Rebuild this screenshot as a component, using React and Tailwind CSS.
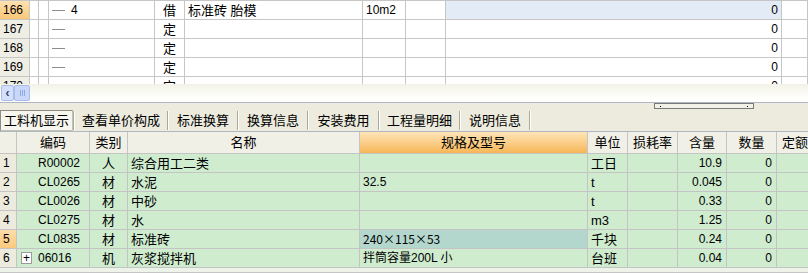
import React from "react";

// ─── Data ─────────────────────────────────────────────────────────────────────

const topRows = [
  { num: "166", active: true, tree: "4", type: "借", name: "标准砖 胎模", unit: "10m2" },
  { num: "167", tree: "", type: "定" },
  { num: "168", tree: "", type: "定" },
  { num: "169", tree: "", type: "定" },
  { num: "170", tree: "", type: "定" },
];

const tabs = [
  { label: "工料机显示", w: "w-[73px]", active: true },
  { label: "查看单价构成", w: "w-[92px]" },
  { label: "标准换算", w: "w-[68px]" },
  { label: "换算信息", w: "w-[68px]" },
  { label: "安装费用", w: "w-[69px]" },
  { label: "工程量明细", w: "w-[79px]" },
  { label: "说明信息", w: "w-[68px]" },
];

const items = [
  { n: "1", code: "R00002", kind: "人", name: "综合用工二类", spec: "", unit: "工日", qty: "10.9" },
  { n: "2", code: "CL0265", kind: "材", name: "水泥", spec: "32.5", unit: "t", qty: "0.045" },
  { n: "3", code: "CL0026", kind: "材", name: "中砂", spec: "", unit: "t", qty: "0.33" },
  { n: "4", code: "CL0275", kind: "材", name: "水", spec: "", unit: "m3", qty: "1.25" },
  { n: "5", code: "CL0835", kind: "材", name: "标准砖", spec: "240×115×53", unit: "千块", qty: "0.24", active: true },
  { n: "6", code: "06016", kind: "机", name: "灰浆搅拌机", spec: "拌筒容量200L 小", unit: "台班", qty: "0.04", plus: true },
];

const cell = "flex items-center shrink-0 h-full border-r overflow-hidden whitespace-nowrap";
const cjk = { fontFamily: '"Noto Sans CJK SC", sans-serif' };

// ─── Upper grid ───────────────────────────────────────────────────────────────

function TopRow({ row }) {
  const b = "border-[#c6c6c6]";
  return (
    <div className="flex h-[19px] border-b border-[#c6c6c6] bg-white">
      <div className={`${cell} ${b} w-[30px] pl-[3px] ${row.active ? "bg-linear-to-b from-[#fee2b0] to-[#f9c777]" : "bg-[#efeee4]"}`}>
        {row.num}
      </div>
      <div className={`${cell} ${b} w-[9px]`} />
      <div className={`${cell} ${b} w-[10px]`} />
      <div className={`${cell} ${b} w-[106px] pl-[3px]`}>
        <span className="w-[13px] h-px bg-[#8c8c8c]" />
        {row.tree && <span className="ml-[6px]">{row.tree}</span>}
      </div>
      <div className={`${cell} ${b} w-[30px] justify-center text-[13px]`}>{row.type}</div>
      <div className={`${cell} ${b} w-[178px] pl-[3px] text-[13px]`}>{row.name}</div>
      <div className={`${cell} ${b} w-[43px] pl-[3px]`}>{row.unit}</div>
      <div className={`${cell} ${b} w-[40px]`} />
      <div className={`${cell} ${b} w-[336px] justify-end pr-[3px] ${row.active ? "bg-[#e3ecf6]" : ""}`}>0</div>
      <div className={`${cell} ${b} w-[26px]`} />
    </div>
  );
}

function ScrollBar() {
  return (
    <div className="flex h-[18px] bg-linear-to-b from-[#f3f2e7] via-[#fbfbf6] to-white items-center">
      <div className="w-[13px] h-[16px] ml-px rounded-[2px] border border-[#a9bde6] bg-[#d4e0fb] flex items-center justify-center text-[12px] font-bold text-[#2c3e6e] leading-none">
        ‹
      </div>
      <div className="w-[16px] h-[16px] rounded-[2px] border border-[#a9bde6] bg-[#c9d8fa] flex items-center justify-center gap-px">
        <span className="w-px h-[6px] bg-[#8ea8e0]" />
        <span className="w-px h-[6px] bg-[#8ea8e0]" />
        <span className="w-px h-[6px] bg-[#8ea8e0]" />
      </div>
    </div>
  );
}

// ─── Tabs ─────────────────────────────────────────────────────────────────────

function TabBar() {
  return (
    <div className="h-[30px] bg-[#ecebde] border-t border-[#b0b7c4] border-b flex flex-col">
      <div className="h-[7px] flex">
        <div className="ml-[654px] w-[100px] h-[6px] border border-[#7a7a7a] bg-[#f2f1e8] flex items-center justify-between px-[5px]">
          <span className="w-px h-px bg-black" />
          <span className="w-px h-px bg-black" />
        </div>
      </div>
      <div className="flex items-center h-[21px] text-[13px]">
        {tabs.map((t) => (
          <React.Fragment key={t.label}>
            <div
              className={`${t.w} h-[21px] flex items-center justify-center ${
                t.active ? "bg-[#f6f5ee] border border-[#c4c2b4] border-t-[#8f8d82] border-l-[#8f8d82]" : ""
              }`}
            >
              {t.label}
            </div>
            <div className="w-[2px] h-[19px] border-l border-[#aca899] border-r border-r-white" />
          </React.Fragment>
        ))}
      </div>
    </div>
  );
}

// ─── Lower grid ───────────────────────────────────────────────────────────────

function Header() {
  const b = "border-[#c4c4c4]";
  return (
    <div className="flex h-[22px] bg-[#f1f0e6] border-b border-[#c4c4c4] text-[13px]">
      <div className={`${cell} ${b} w-[17px]`} />
      <div className={`${cell} ${b} w-[73px] justify-center`}>编码</div>
      <div className={`${cell} ${b} w-[38px] justify-center`}>类别</div>
      <div className={`${cell} ${b} w-[232px] justify-center`}>名称</div>
      <div className={`${cell} ${b} w-[228px] justify-center bg-linear-to-b from-[#fee5b6] to-[#f6b655]`}>规格及型号</div>
      <div className={`${cell} ${b} w-[40px] justify-center`}>单位</div>
      <div className={`${cell} ${b} w-[50px] justify-center`}>损耗率</div>
      <div className={`${cell} ${b} w-[49px] justify-center`}>含量</div>
      <div className={`${cell} ${b} w-[50px] justify-center`}>数量</div>
      <div className={`${cell} ${b} w-[60px] pl-[5px]`}>定额价</div>
    </div>
  );
}

function ItemRow({ it }) {
  const b = "border-[#c4c4c4]";
  return (
    <div className="flex h-[19px] border-b border-[#c4c4c4] bg-[#cfeccf]">
      <div className={`${cell} ${b} w-[17px] pl-[3px] ${it.active ? "bg-linear-to-b from-[#fedcaa] to-[#fbc97c]" : "bg-[#ecebdd]"}`}>
        {it.n}
      </div>
      <div className={`${cell} ${b} w-[73px] pl-[4px]`}>
        {it.plus ? (
          <span className="w-[11px] h-[12px] border border-[#9a9a9a] bg-white flex items-center justify-center text-[12px] leading-none">
            +
          </span>
        ) : (
          <span className="w-[11px]" />
        )}
        <span className="ml-[6px]">{it.code}</span>
      </div>
      <div className={`${cell} ${b} w-[38px] justify-center text-[13px]`}>{it.kind}</div>
      <div className={`${cell} ${b} w-[232px] pl-[3px] text-[13px]`}>{it.name}</div>
      <div className={`${cell} ${b} w-[228px] pl-[3px] ${it.active ? "bg-[#b4d7cd]" : ""}`}>
        {it.active ? <span style={cjk}>{it.spec}</span> : it.spec}
      </div>
      <div className={`${cell} ${b} w-[40px] pl-[3px] text-[13px]`}>{it.unit}</div>
      <div className={`${cell} ${b} w-[50px]`} />
      <div className={`${cell} ${b} w-[49px] justify-end pr-[4px]`}>{it.qty}</div>
      <div className={`${cell} ${b} w-[50px] justify-end pr-[4px]`}>0</div>
      <div className={`${cell} ${b} w-[60px]`} />
    </div>
  );
}

// ─── Main Component ───────────────────────────────────────────────────────────

export default function App() {
  return (
    <div
      className="w-[808px] h-[275px] overflow-hidden bg-white text-[12px] text-black leading-none"
      style={{ fontFamily: '"Liberation Sans", "Noto Sans CJK SC", sans-serif' }}
    >
      <div className="h-[84px] overflow-hidden border-t border-[#c6c6c6]">
        {topRows.map((r) => (
          <TopRow key={r.num} row={r} />
        ))}
      </div>
      <ScrollBar />
      <TabBar />
      <div className="overflow-hidden">
        <Header />
        {items.map((it) => (
          <ItemRow key={it.n} it={it} />
        ))}
        <div className="h-[5px] bg-[#eef3ea] border-b border-[#c4c4c4]" />
      </div>
    </div>
  );
}
